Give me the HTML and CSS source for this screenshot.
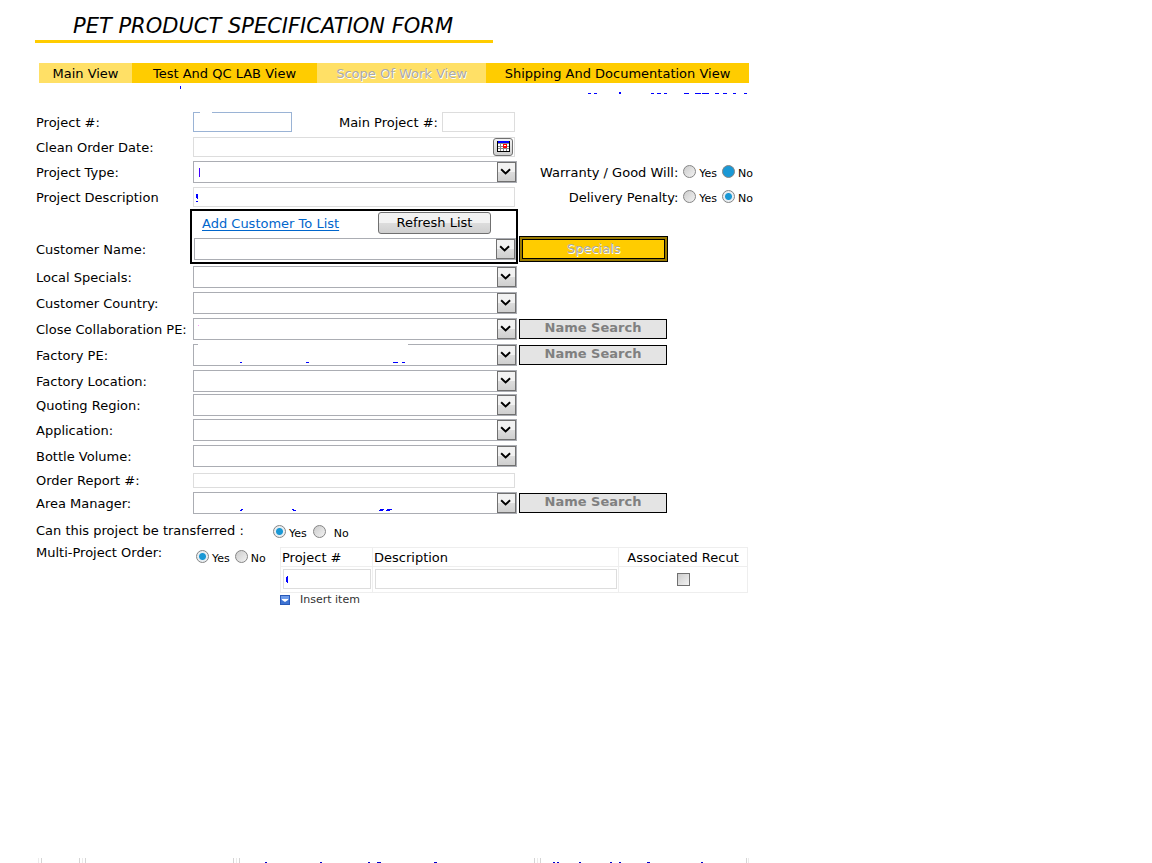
FILE: index.html
```
<!DOCTYPE html>
<html lang="en">
<head>
<meta charset="utf-8">
<title>PET Product Specification Form</title>
<link rel="stylesheet" href="styles.css">
</head>
<body>
<svg class="symbols" aria-hidden="true">
  <symbol id="chevron" viewBox="0 0 19 20"><path d="M3.500 7 8.500 11.700 13.500 7" fill="none" stroke="#000" stroke-width="2.2"/></symbol>
</svg>
<main class="page">
  <h1 class="title">PET PRODUCT SPECIFICATION FORM</h1>
  <nav class="tabs">
    <button class="tab tab-main">Main View</button>
    <button class="tab tab-lab">Test And QC LAB View</button>
    <button class="tab tab-scope" disabled>Scope Of Work View</button>
    <button class="tab tab-ship">Shipping And Documentation View</button>
  </nav>
  <svg class="strip" viewBox="0 0 712 26" fill="#00f" shape-rendering="crispEdges" aria-hidden="true">
    <path d="M141 3h1v3h-1zM549 10h3v1h-3zM555 10h3v1h-3zM580 9h2v2h-2zM612 10h3v1h-3zM618 10h4v1h-4zM625 10h3v1h-3zM645 10h5v1h-5zM656 10h6v1h-6zM663 10h7v1h-7zM676 10h4v1h-4zM684 10h4v1h-4zM694 10h3v1h-3zM705 10h3v1h-3z"/>
  </svg>

  <form class="form">
    <div class="row">
      <label for="project">Project #:</label>
      <div class="split">
        <span class="field project"><input id="project" class="text focus" type="text"><span class="patch patch-small"></span></span>
        <span class="pair"><label for="main-project">Main Project #:</label><input id="main-project" class="text short" type="text"></span>
      </div>
    </div>
    <div class="row">
      <label for="date">Clean Order Date:</label>
      <span class="field line"><input id="date" class="text" type="text">
        <button class="calendar" type="button" aria-label="Pick a date">
          <svg width="13" height="11" viewBox="0 0 13 11" shape-rendering="crispEdges"><path fill="#000" d="M0 0h13v11H0z"/><path fill="#888" d="M1 2h11v8H1z"/><path fill="#00f" d="M1 0h11v2H1z"/><path fill="#fff" d="M1 3h2v2H1zM4 3h2v2H4zM7 3h2v2H7zM10 3h2v2h-2zM1 6h2v1H1zM4 6h2v1H4zM10 6h2v1h-2zM1 8h2v2H1zM4 8h2v2H4zM7 8h2v2H7zM10 8h2v2h-2z"/><path fill="#f00" d="M6 3h4v4H6z"/><path fill="#fff" d="M7 4h2v1H7z"/></svg>
        </button></span>
    </div>
    <div class="row">
      <label for="type">Project Type:</label>
      <span class="field"><select id="type"><option></option></select><svg class="arrow"><use href="#chevron"/></svg><svg class="marks" aria-hidden="true"><path fill="#40f" d="M6 7h1v9H6z"/></svg></span>
      <fieldset class="choice" aria-label="Warranty"><span>Warranty / Good Will:</span><label><input type="radio" name="warranty">Yes</label><label><input class="hot" type="radio" name="warranty" checked>No</label></fieldset>
    </div>
    <div class="row">
      <label for="description">Project Description</label>
      <span class="field line"><input id="description" class="text" type="text"><svg class="marks" aria-hidden="true"><path fill="#00f" d="M3 7h2v5H4v-1H3zM3 14h2v1H3z"/></svg></span>
      <fieldset class="choice" aria-label="Penalty"><span>Delivery Penalty:</span><label><input type="radio" name="penalty">Yes</label><label><input type="radio" name="penalty" checked>No</label></fieldset>
    </div>
    <div class="row customer">
      <label for="customer">Customer Name:</label>
      <div class="customer-box">
        <div class="customer-tools"><a href="#customer">Add Customer To List</a><button class="refresh" type="button">Refresh List</button></div>
        <span class="field"><select id="customer"><option></option></select><svg class="arrow"><use href="#chevron"/></svg></span>
      </div>
      <button class="specials" type="button" disabled>Specials</button>
    </div>
    <div class="row tall">
      <label for="local">Local Specials:</label>
      <span class="field"><select id="local"><option></option></select><svg class="arrow"><use href="#chevron"/></svg></span>
    </div>
    <div class="row tall">
      <label for="country">Customer Country:</label>
      <span class="field"><select id="country"><option></option></select><svg class="arrow"><use href="#chevron"/></svg></span>
    </div>
    <div class="row tall">
      <label for="close-pe">Close Collaboration PE:</label>
      <span class="field"><select id="close-pe"><option></option></select><svg class="arrow"><use href="#chevron"/></svg><svg class="marks" aria-hidden="true"><path fill="#f9f" d="M5 7h1v1H5z"/></svg></span>
      <button class="search" type="button" disabled>Name Search</button>
    </div>
    <div class="row tall">
      <label for="factory-pe">Factory PE:</label>
      <span class="field"><select id="factory-pe"><option></option></select><svg class="arrow"><use href="#chevron"/></svg><svg class="marks" aria-hidden="true"><path fill="#00f" d="M47 18h2v1h-2zM113 18h3v1h-3zM200 18h5v1h-5zM209 18h3v1h-3z"/></svg><span class="patch patch-wide"></span></span>
      <button class="search" type="button" disabled>Name Search</button>
    </div>
    <div class="row">
      <label for="location">Factory Location:</label>
      <span class="field"><select id="location"><option></option></select><svg class="arrow"><use href="#chevron"/></svg></span>
    </div>
    <div class="row tight">
      <label for="region">Quoting Region:</label>
      <span class="field"><select id="region"><option></option></select><svg class="arrow"><use href="#chevron"/></svg></span>
    </div>
    <div class="row tall">
      <label for="application">Application:</label>
      <span class="field"><select id="application"><option></option></select><svg class="arrow"><use href="#chevron"/></svg></span>
    </div>
    <div class="row tall">
      <label for="volume">Bottle Volume:</label>
      <span class="field"><select id="volume"><option></option></select><svg class="arrow"><use href="#chevron"/></svg></span>
    </div>
    <div class="row slim">
      <label for="report">Order Report #:</label>
      <span class="field line"><input id="report" class="text low" type="text"></span>
    </div>
    <div class="row tight">
      <label for="manager">Area Manager:</label>
      <span class="field"><select id="manager"><option></option></select><svg class="arrow"><use href="#chevron"/></svg><svg class="marks" aria-hidden="true"><path fill="#00f" d="M48 17h2v1h-1v1h-2v-1h1zM99 17h2v1h2v1h-3v-1h-1zM187 17h4v1h-1v1h-4v-1h1zM194 17h5v1h-2v1h-4v-1h1z"/></svg></span>
      <button class="search" type="button" disabled>Name Search</button>
    </div>

    <fieldset class="transfer" aria-label="Transfer">
      <span class="question">Can this project be transferred :</span>
      <label><input type="radio" name="transfer" checked>Yes</label><label class="wide"><input type="radio" name="transfer">No</label>
    </fieldset>

    <div class="multi">
      <span class="question">Multi-Project Order:</span>
      <fieldset class="choice" aria-label="Multi-project order"><label><input type="radio" name="multi" checked>Yes</label><label><input type="radio" name="multi">No</label></fieldset>
      <div class="projects">
        <table>
          <thead><tr><th class="col-project">Project #</th><th>Description</th><th class="col-recut">Associated Recut</th></tr></thead>
          <tbody><tr>
            <td><span class="field"><input class="text" type="text" aria-label="Project number"><svg class="marks" aria-hidden="true"><path fill="#00f" d="M4 7h1v7H4v-1H3V8h1z"/></svg></span></td>
            <td><input class="text" type="text" aria-label="Description"></td>
            <td class="check"><input type="checkbox" aria-label="Associated Recut"></td>
          </tr></tbody>
        </table>
        <button class="insert" type="button">
          <svg width="10" height="10" viewBox="0 0 10 10"><path fill="#2859b8" d="M0 0h10v10H0z"/><path fill="#6d9bea" d="M1 1h8v4H1z"/><path fill="#3e73d2" d="M1 5h8v4H1z"/><path fill="#fff" d="M2 4h6v1L5 7 2 5z"/></svg>
          Insert item</button>
      </div>
    </div>
  </form>

  <svg class="cut-table" viewBox="0 0 712 5" shape-rendering="crispEdges" aria-hidden="true">
    <path fill="#ebebeb" d="M-1 0h1v5h-1zM43 0h1v5h-1zM197 0h1v5h-1zM498 0h1v5h-1zM709 0h1v5h-1z"/>
    <path fill="#d5d5d5" d="M2 0h1v5H2zM40 0h1v5h-1zM46 0h1v5h-1zM194 0h1v5h-1zM200 0h1v5h-1zM495 0h1v5h-1zM501 0h1v5h-1zM707 0h1v5h-1z"/>
    <path fill="#00c" d="M226 4h2v1h-2zM281 4h2v1h-2zM329 4h2v1h-2zM338 4h4v1h-4zM395 4h3v1h-3zM514 4h2v1h-2zM518 4h2v1h-2zM540 4h2v1h-2zM571 4h2v1h-2zM580 4h2v1h-2zM608 4h3v1h-3zM662 4h2v1h-2z"/>
  </svg>
</main>
</body>
</html>
```
FILE: styles.css
```
* { box-sizing: border-box; }
body { margin: 0; background: #fff; color: #000; font: 13px/16px "DejaVu Sans", Verdana, sans-serif; }
button, input, select { font: inherit; color: inherit; margin: 0; }
button { padding: 0; white-space: nowrap; }
fieldset { border: 0; margin: 0; padding: 0; min-width: 0; }
.symbols { position: absolute; width: 0; height: 0; }

.page { min-height: 100vh; padding-left: 35px; display: flex; flex-direction: column; align-items: flex-start; }
.title { margin: 0; padding: 14px 40px 2px 38px; border-bottom: 3px solid #fc0; font-size: 21px; line-height: 24px; font-weight: 400; font-style: italic; white-space: nowrap; }
.tabs { display: flex; margin: 20px 0 0 4px; }
.tab { height: 20px; padding-top: 2px; border: 0; background: #fc0; }
.tab-main { width: 93px; background: #ffe066; }
.tab-lab { width: 185px; }
.tab-scope { width: 169px; background: #ffe066; color: #aaa; text-shadow: 1px 1px #fff; }
.tab-ship { width: 263px; }
.strip { width: 712px; height: 26px; margin-left: 4px; flex: none; }

.form { width: 100%; max-width: 720px; padding-left: 1px; }
.row { display: grid; grid-template-columns: 155px 324px minmax(0, 1fr); column-gap: 2px; align-items: center; height: 25px; white-space: nowrap; }
.row.tight { height: 24px; }
.row.tall { height: 26px; }
.row.slim { height: 22px; }
.row > label, .pair label { padding-top: 2px; }

.field { position: relative; display: grid; align-items: center; }
.field > * { grid-area: 1 / 1; min-width: 0; }
.line { margin-right: 2px; }
.text { display: block; width: 100%; height: 20px; padding: 0 4px; border: 1px solid #ddd; background: #fff; outline: 0; }
.text.focus { border-color: #9ab3d5; }
.text.low { height: 15px; }
.split { display: flex; justify-content: space-between; padding-right: 2px; }
.project { width: 99px; }
.pair { display: flex; align-items: center; gap: 4px; }
.pair .text { width: 73px; }
select { appearance: none; width: 100%; height: 22px; padding: 0 24px 0 4px; border: 1px solid #abadb3; border-radius: 0; background: #fff; }
.arrow { width: 19px; height: 20px; margin-right: 1px; justify-self: end; border: 1px solid #707070; background: linear-gradient(#f2f2f2 0 50%, #ddd 50%, #cfcfcf); pointer-events: none; }
.marks { position: absolute; inset: 0; width: 100%; height: 100%; pointer-events: none; }
.patch { position: absolute; top: 0; height: 1px; background: #fff; }
.patch-small { left: 7px; width: 12px; }
.patch-wide { left: 5px; width: 210px; }
.calendar { display: grid; place-items: center; justify-self: end; width: 20px; height: 18px; margin-right: 2px; border: 1px solid #707070; border-radius: 3px; background: linear-gradient(#f2f2f2, #cfcfcf); }

.choice { display: flex; align-items: center; justify-content: flex-end; gap: 5px; padding-right: 2px; }
.choice > span { padding-top: 2px; }
.choice label, .transfer label { display: flex; align-items: center; gap: 3px; padding-top: 5px; font-size: 11px; line-height: 18px; }
input[type="radio"] { appearance: none; flex: none; width: 13px; height: 13px; margin-bottom: 5px; border: 1px solid #858585; border-radius: 50%; background: linear-gradient(135deg, #ccc, #f2f2f2); }
input[type="radio"]:checked { background: radial-gradient(circle, #1a98d5 0 3px, #e8eef2 4px); }
input[type="radio"].hot:checked { background: #1a98d5; }
input[type="checkbox"] { appearance: none; display: block; width: 13px; height: 13px; margin: 0 auto; border: 1px solid #707070; background: linear-gradient(135deg, #ccc, #f2f2f2); }

.row.customer { height: 55px; align-items: end; }
.customer > label { padding-bottom: 6px; }
.customer-box { height: 55px; margin: 0 -1px 0 -3px; border: 2px solid #000; }
.customer-box .field { margin-left: 2px; }
.customer-tools { display: flex; align-items: center; justify-content: space-between; height: 27px; padding: 0 25px 3px 10px; }
.customer-tools a { color: #06c; text-underline-offset: 2px; padding-top: 2px; }
.refresh { width: 113px; height: 22px; border: 1px solid #707070; border-radius: 3px; background: linear-gradient(#f2f2f2 0 50%, #ddd 50%, #cfcfcf); }
.specials { width: 149px; height: 26px; margin-bottom: 2px; border: 1px solid #000; background: #fc0; box-shadow: inset 0 0 0 2px #997a00, inset 0 0 0 3px #000; color: #aaa; text-shadow: 1px 1px #fff; }
.search { width: 148px; height: 20px; padding-bottom: 2px; border: 1px solid #000; background: #e4e4e4; color: #808080; font-weight: 700; line-height: 16px; }

.transfer { display: flex; align-items: center; gap: 6px; height: 29px; padding-top: 3px; }
.transfer .question { width: 231px; }
.transfer .wide { gap: 8px; }
.multi { display: grid; grid-template-columns: 160px 84px minmax(0, 468px); align-items: start; }
.multi .question { padding-top: 1px; }
.multi .choice { justify-content: flex-start; padding: 1px 0 0; }
.projects { padding-top: 3px; }
table { width: 100%; border-collapse: collapse; table-layout: fixed; }
th, td { border: 1px solid #eee; padding: 2px 1px 0; }
th { height: 19px; font-weight: 400; text-align: left; white-space: nowrap; }
td { height: 26px; padding: 2px 1px 3px 2px; }
th.col-project { width: 92px; }
th.col-recut { width: 129px; text-align: center; }
.insert { display: flex; align-items: center; gap: 10px; border: 0; background: none; color: #333; font-size: 11px; line-height: 14px; }

.cut-table { width: 712px; height: 5px; margin: auto 0 0 4px; flex: none; overflow: visible; }
```
